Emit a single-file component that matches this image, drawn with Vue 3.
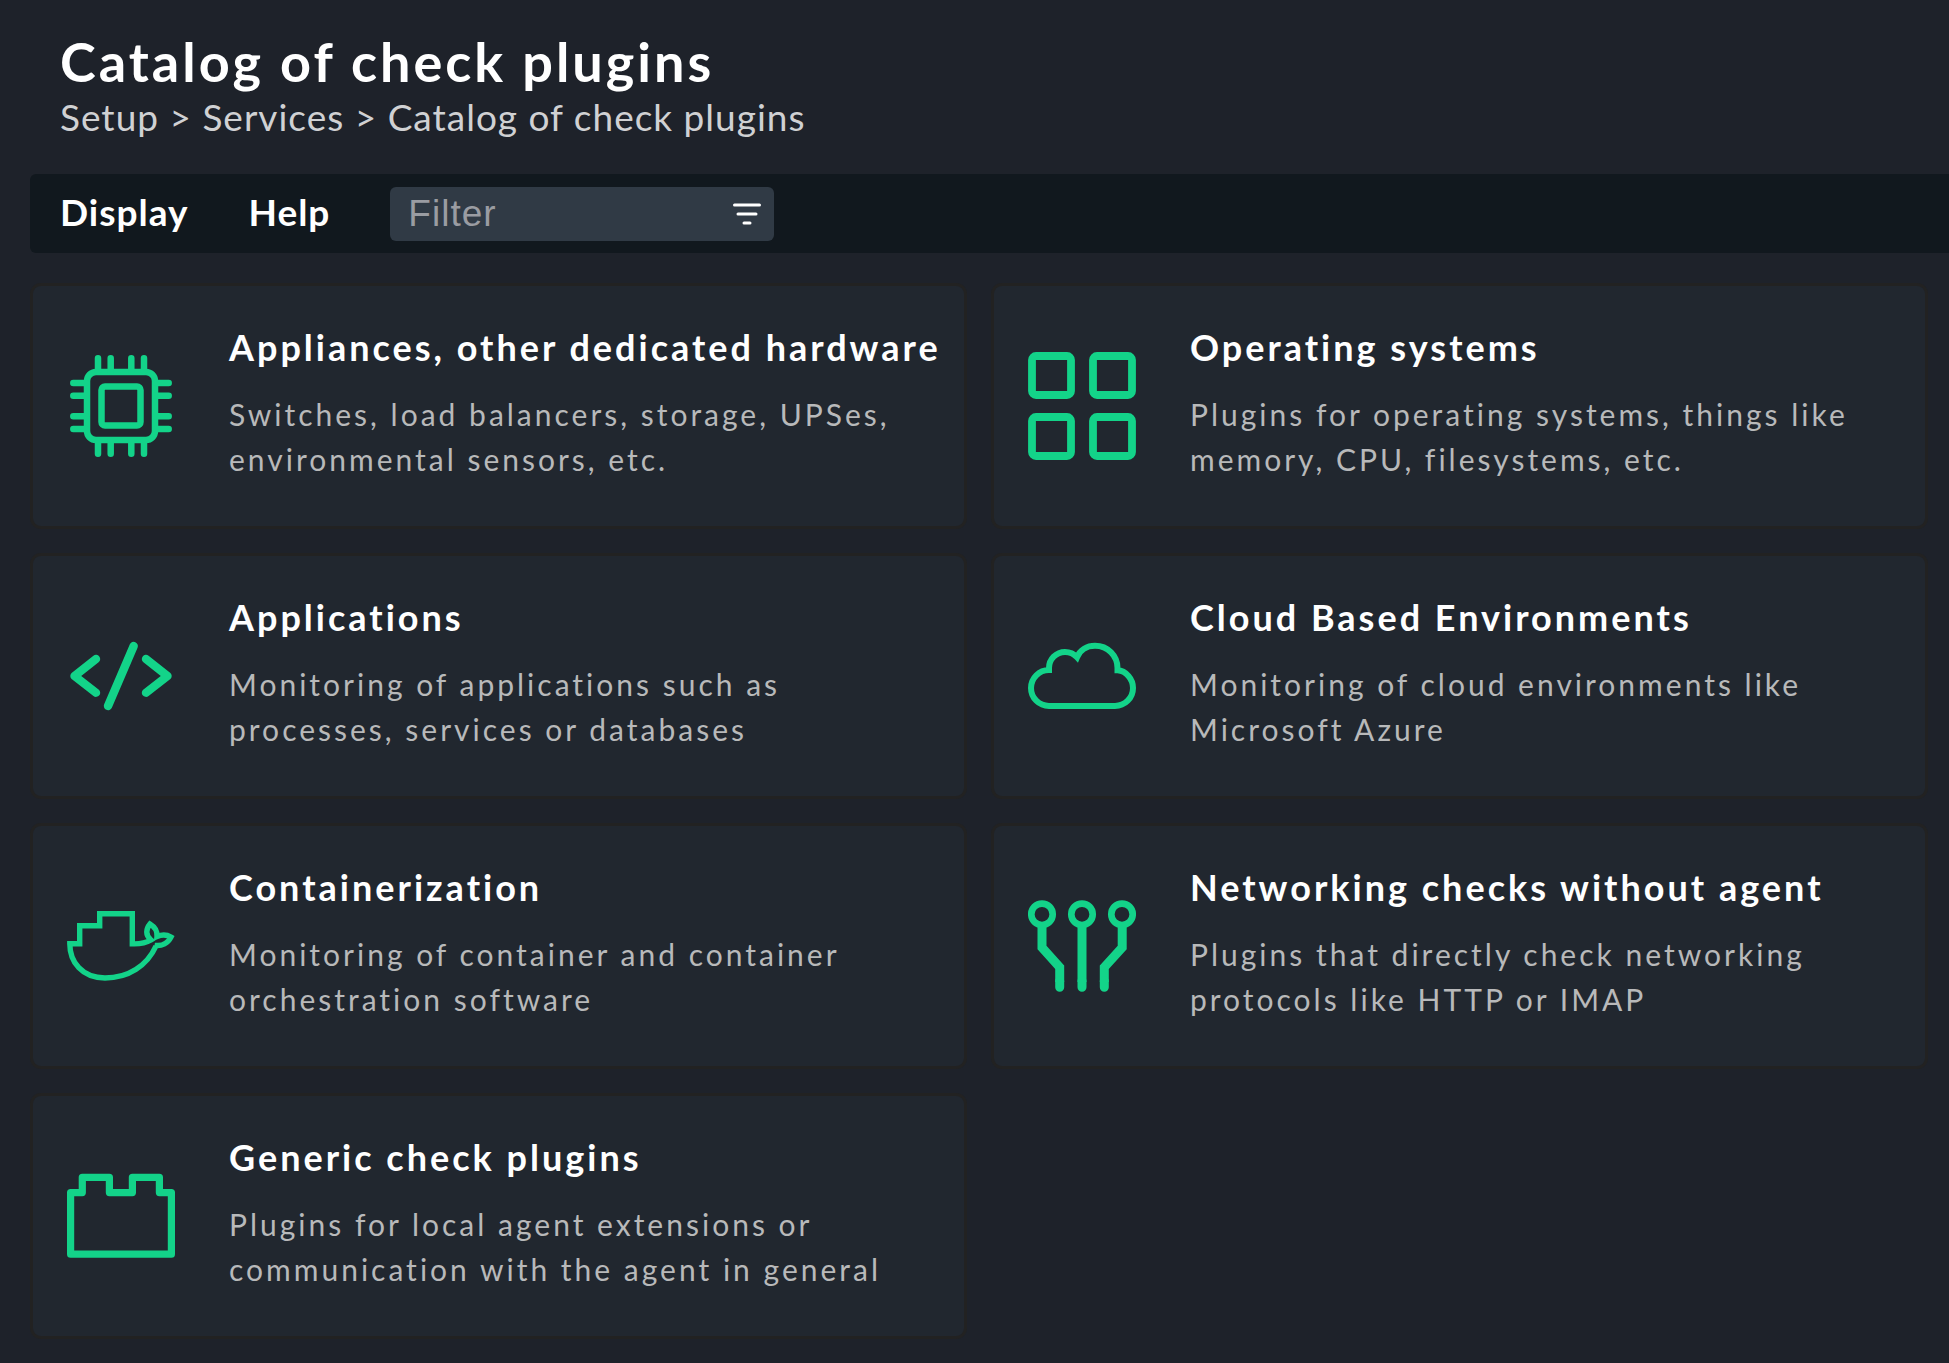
<script setup>
import { ref, computed } from 'vue';

const filter = ref('');

const breadcrumb = ['Setup', 'Services', 'Catalog of check plugins'];

const topics = [
    {
        icon: 'hardware',
        title: 'Appliances, other dedicated hardware',
        text: 'Switches, load balancers, storage, UPSes, environmental sensors, etc.',
    },
    {
        icon: 'os',
        title: 'Operating systems',
        text: 'Plugins for operating systems, things like memory, CPU, filesystems, etc.',
    },
    {
        icon: 'app',
        title: 'Applications',
        text: 'Monitoring of applications such as processes, services or databases',
    },
    {
        icon: 'cloud',
        title: 'Cloud Based Environments',
        text: 'Monitoring of cloud environments like Microsoft Azure',
    },
    {
        icon: 'container',
        title: 'Containerization',
        text: 'Monitoring of container and container orchestration software',
    },
    {
        icon: 'network',
        title: 'Networking checks without agent',
        text: 'Plugins that directly check networking protocols like HTTP or IMAP',
    },
    {
        icon: 'generic',
        title: 'Generic check plugins',
        text: 'Plugins for local agent extensions or communication with the agent in general',
    },
];

const visibleTopics = computed(() => {
    const q = filter.value.trim().toLowerCase();
    return topics.filter((t) => `${t.title} ${t.text}`.toLowerCase().includes(q));
});
</script>

<template>
    <header class="page-header">
        <h1 class="page-title">Catalog of check plugins</h1>
        <nav class="breadcrumb" aria-label="Breadcrumb">
            <template v-for="(item, idx) in breadcrumb" :key="item">
                <span v-if="idx > 0">&nbsp;&gt;&nbsp;</span>
                <a href="#">{{ item }}</a>
            </template>
        </nav>
    </header>

    <div class="menu-bar">
        <button type="button" class="menu-btn">Display</button>
        <button type="button" class="menu-btn">Help</button>
        <form class="filter" @submit.prevent>
            <input v-model="filter" class="filter-input" type="text" placeholder="Filter" aria-label="Filter" />
            <button type="submit" class="filter-btn" aria-label="Apply filter">
                <svg viewBox="0 0 28 22" width="28" height="22">
                    <path d="M1.5 2H26.5M5 11H23M11 20H17" />
                </svg>
            </button>
        </form>
    </div>

    <main class="topics">
        <a v-for="topic in visibleTopics" :key="topic.icon" href="#" class="topic">
            <svg class="topic-icon" viewBox="0 0 108 108" aria-hidden="true">
                <g v-if="topic.icon === 'hardware'" stroke-width="6.5" stroke-linecap="round">
                    <rect x="20" y="20" width="68" height="68" rx="9" />
                    <rect x="34.5" y="34.5" width="39" height="39" rx="3.5" />
                    <path d="M31 6.3V19M43.7 6.3V19M64.3 6.3V19M77 6.3V19" />
                    <path d="M31 89V101.7M43.7 89V101.7M64.3 89V101.7M77 89V101.7" />
                    <path d="M6.3 31H19M6.3 43.7H19M6.3 64.3H19M6.3 77H19" />
                    <path d="M89 31H101.7M89 43.7H101.7M89 64.3H101.7M89 77H101.7" />
                </g>
                <g v-else-if="topic.icon === 'os'" stroke-width="7.8">
                    <rect x="4" y="4" width="39" height="39" rx="4" />
                    <rect x="65" y="4" width="39" height="39" rx="4" />
                    <rect x="4" y="65" width="39" height="39" rx="4" />
                    <rect x="65" y="65" width="39" height="39" rx="4" />
                </g>
                <g v-else-if="topic.icon === 'app'" stroke-width="8.4" stroke-linecap="round" stroke-linejoin="round">
                    <path d="M29 37L7.5 54L29 70.7M66.7 24L41 84M79 37L100.5 54L79 70.7" />
                </g>
                <g v-else-if="topic.icon === 'cloud'" stroke-width="6">
                    <path d="M21 84A18 18 0 0 1 21 48V46A16 16 0 0 1 37 30C42 30 46 32 49 35.3C52 28 59 23.8 67 23.8C80 23.8 89.5 34 89.5 46V48.3C98 48.7 105 57 105 66A18 18 0 0 1 87 84Z" />
                </g>
                <g v-else-if="topic.icon === 'container'" stroke-width="5.4">
                    <path d="M89 54C80 74 61 86 38 86C15 86 2.8 70 2.8 51.7H12.7V33.7H32.7V21.7H65.3V51.8C72 52 79 51 84 48C78 43 79 37 83 32C88 35 90.5 39 90 44.5C95 42.3 100 42.6 104 45C101 51 95 54.5 87.5 53.3" />
                </g>
                <g v-else-if="topic.icon === 'network'">
                    <g stroke-width="6.7">
                        <circle cx="14" cy="22.3" r="10.7" />
                        <circle cx="54" cy="22.3" r="10.7" />
                        <circle cx="94" cy="22.3" r="10.7" />
                    </g>
                    <g stroke-width="9">
                        <path d="M14 35V55.5L31.7 75.3V90M54 35V90M94.2 35V55.5L76.3 75.3V90" />
                        <path d="M31.7 89V95.3M54 89V95.3M76.3 89V95.3" stroke-linecap="round" />
                    </g>
                </g>
                <g v-else stroke-width="7.2" stroke-linejoin="round">
                    <path d="M3.6 30.6H15.3V15.3H42.4V30.6H65.4V15.3H92.4V30.6H104.4V92.2H3.6Z" />
                </g>
            </svg>
            <div class="topic-body">
                <h2 class="topic-title">{{ topic.title }}</h2>
                <p class="topic-text">{{ topic.text }}</p>
            </div>
        </a>
    </main>
</template>

<style>
body {
    margin: 0;
    background: #1e222a;
    color: #fff;
    font-family: Lato, 'Liberation Sans', sans-serif;
}
</style>

<style scoped>
.page-header { padding: 29px 60px 35px; }
.page-title {
    margin: 0; font-size: 54px; line-height: 66px;
    font-weight: 700; letter-spacing: 3px;
}
.breadcrumb {
    font-size: 37px; line-height: 44px;
    letter-spacing: 1px; color: #d0d1d3;
}
.breadcrumb a { color: inherit; text-decoration: none; }
.breadcrumb a:hover { color: #13d389; }

.menu-bar {
    display: flex;
    align-items: center;
    gap: 60px;
    margin-left: 30px;
    padding: 13px 30px 12px;
    background: #11181e;
    border-radius: 6px 0 0 6px;
}
.menu-btn {
    padding: 0 0 4px; border: 0; background: none; cursor: pointer;
    font-family: inherit; font-size: 37px; line-height: 44px;
    font-weight: 700; letter-spacing: 1px; color: #fff;
}
.menu-btn:hover { color: #13d389; }
.filter {
    display: flex;
    align-items: center;
    box-sizing: border-box;
    width: 384px; height: 54px; padding: 0 13px 0 18px;
    background: #303a45; border-radius: 6px;
}
.filter-input {
    flex: 1; min-width: 0; padding: 0; border: 0; outline: none;
    background: transparent; color: #fff;
    font-family: 'Liberation Sans', sans-serif; font-size: 37px; letter-spacing: 1px;
}
.filter-input::placeholder { color: #9a9ca2; opacity: 1; }
.filter-btn { display: flex; padding: 0; border: 0; background: none; cursor: pointer; }
.filter-btn path { fill: none; stroke: #fff; stroke-width: 3; stroke-linecap: round; }

.topics {
    display: grid;
    grid-template-columns: repeat(2, minmax(0, 1fr));
    gap: 30px;
    padding: 33px 24px 27px 33px;
}
.topic {
    display: flex;
    align-items: center;
    gap: 54px;
    padding: 39px 12px 44px 34px;
    background: #21272f;
    border-radius: 8px;
    box-shadow: 0 0 0 3px #222222;
    color: inherit;
    text-decoration: none;
}
.topic:hover { background: #2a323b; }
.topic-icon {
    flex-shrink: 0; width: 108px; height: 108px;
    margin-top: 5px; fill: none; stroke: #13d389;
}
.topic-body { min-width: 0; }
.topic-title {
    margin: 0 0 23px; font-size: 36px; line-height: 44px;
    font-weight: 700; letter-spacing: 3px;
}
.topic-text {
    margin: 0; font-size: 30px; line-height: 45px;
    letter-spacing: 3px; color: #b8b9ba;
}
</style>
